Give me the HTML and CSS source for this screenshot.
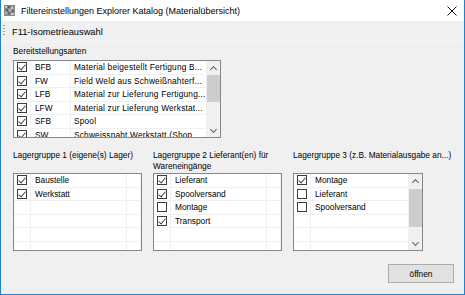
FILE: index.html
```html
<!DOCTYPE html>
<html lang="de">
<head>
<meta charset="utf-8">
<title>Filtereinstellungen</title>
<link rel="stylesheet" href="styles.css">
</head>
<body>
<div class="window">
  <header class="titlebar">
    <svg class="app-icon" width="11" height="11" viewBox="0 0 11 11">
      <rect width="11" height="11" fill="#8a8a8a"/>
      <rect x="1" y="1" width="2" height="2" fill="#c8c8c8"/>
      <rect x="4" y="1" width="2" height="2" fill="#5a5a5a"/>
      <rect x="7" y="2" width="2" height="2" fill="#d0d0d0"/>
      <rect x="2" y="4" width="2" height="2" fill="#5e5e5e"/>
      <rect x="5" y="4" width="2" height="2" fill="#bdbdbd"/>
      <rect x="8" y="5" width="2" height="2" fill="#6a6a6a"/>
      <rect x="1" y="7" width="2" height="2" fill="#b4b4b4"/>
      <rect x="4" y="7" width="2" height="3" fill="#707070"/>
      <rect x="7" y="8" width="3" height="2" fill="#c4c4c4"/>
    </svg>
    <span class="title">Filtereinstellungen Explorer Katalog (Materialübersicht)</span>
    <svg class="close" width="10" height="10" viewBox="0 0 10 10">
      <path d="M0.5 0.5 L9.5 9.5 M9.5 0.5 L0.5 9.5" stroke="#111" stroke-width="1" fill="none"/>
    </svg>
  </header>

  <div class="toolbar">
    <span class="grip"></span>
    <span class="tool-item">F11-Isometrieauswahl</span>
  </div>

  <main class="content">
    <section class="top-group">
      <div class="label">Bereitstellungsarten</div>
      <div class="listbox wide">
        <div class="rows">
          <div class="row"><span class="c-check"><span class="cb checked"></span></span><span class="c-code">BFB</span><span class="c-desc">Material beigestellt Fertigung B...</span></div>
          <div class="row"><span class="c-check"><span class="cb checked"></span></span><span class="c-code">FW</span><span class="c-desc">Field Weld aus Schweißnahterf...</span></div>
          <div class="row"><span class="c-check"><span class="cb checked"></span></span><span class="c-code">LFB</span><span class="c-desc">Material zur Lieferung Fertigung...</span></div>
          <div class="row"><span class="c-check"><span class="cb checked"></span></span><span class="c-code">LFW</span><span class="c-desc">Material zur Lieferung Werkstat...</span></div>
          <div class="row"><span class="c-check"><span class="cb checked"></span></span><span class="c-code">SFB</span><span class="c-desc">Spool</span></div>
          <div class="row"><span class="c-check"><span class="cb checked"></span></span><span class="c-code">SW</span><span class="c-desc">Schweissnaht Werkstatt (Shop...</span></div>
        </div>
        <div class="scrollbar sb-wide">
          <span class="arrow up"></span>
          <span class="thumb"></span>
          <span class="arrow down"></span>
        </div>
      </div>
    </section>

    <section class="groups">
      <div class="group">
        <div class="label two">Lagergruppe 1 (eigene(s) Lager)</div>
        <div class="listbox small">
          <div class="rows">
            <div class="row"><span class="c-check"><span class="cb checked"></span></span><span class="c-name">Baustelle</span><span class="c-rest"></span></div>
            <div class="row"><span class="c-check"><span class="cb checked"></span></span><span class="c-name">Werkstatt</span><span class="c-rest"></span></div>
            <div class="row"><span class="c-check"></span><span class="c-name"></span><span class="c-rest"></span></div>
            <div class="row"><span class="c-check"></span><span class="c-name"></span><span class="c-rest"></span></div>
            <div class="row"><span class="c-check"></span><span class="c-name"></span><span class="c-rest"></span></div>
            <div class="row"><span class="c-check"></span><span class="c-name"></span><span class="c-rest"></span></div>
          </div>
        </div>
      </div>
      <div class="group">
        <div class="label two">Lagergruppe 2 Lieferant(en) für<br>Wareneingänge</div>
        <div class="listbox small">
          <div class="rows">
            <div class="row"><span class="c-check"><span class="cb checked"></span></span><span class="c-name">Lieferant</span><span class="c-rest"></span></div>
            <div class="row"><span class="c-check"><span class="cb checked"></span></span><span class="c-name">Spoolversand</span><span class="c-rest"></span></div>
            <div class="row"><span class="c-check"><span class="cb"></span></span><span class="c-name">Montage</span><span class="c-rest"></span></div>
            <div class="row"><span class="c-check"><span class="cb checked"></span></span><span class="c-name">Transport</span><span class="c-rest"></span></div>
            <div class="row"><span class="c-check"></span><span class="c-name"></span><span class="c-rest"></span></div>
            <div class="row"><span class="c-check"></span><span class="c-name"></span><span class="c-rest"></span></div>
          </div>
        </div>
      </div>
      <div class="group">
        <div class="label two">Lagergruppe 3 (z.B. Materialausgabe an...)</div>
        <div class="listbox small last">
          <div class="rows">
            <div class="row"><span class="c-check"><span class="cb checked"></span></span><span class="c-name">Montage</span></div>
            <div class="row"><span class="c-check"><span class="cb"></span></span><span class="c-name">Lieferant</span></div>
            <div class="row"><span class="c-check"><span class="cb"></span></span><span class="c-name">Spoolversand</span></div>
            <div class="row"><span class="c-check"></span><span class="c-name"></span></div>
            <div class="row"><span class="c-check"></span><span class="c-name"></span></div>
            <div class="row"><span class="c-check"></span><span class="c-name"></span></div>
          </div>
          <div class="scrollbar sb-small">
            <span class="arrow up"></span>
            <span class="thumb"></span>
            <span class="arrow down"></span>
          </div>
        </div>
      </div>
    </section>

    <div class="actions">
      <button class="btn" type="button">öffnen</button>
    </div>
  </main>
</div>
</body>
</html>
```

FILE: styles.css
```css
* { box-sizing: border-box; }

html, body {
  margin: 0;
  padding: 0;
  background: #f0f0f0;
}

body {
  font-family: "Liberation Sans", Arial, sans-serif;
  font-size: 8.3px;
  color: #000;
}

.window {
  width: 465px;
  height: 295px;
  display: flex;
  flex-direction: column;
  background: #f0f0f0;
  border-left: 1px solid #1a84d8;
  border-right: 1px solid #1a84d8;
  border-bottom: 1px solid #1a84d8;
  overflow: hidden;
}

.titlebar {
  height: 21px;
  flex: none;
  background: #fff;
  display: flex;
  align-items: center;
  padding-left: 3px;
  padding-right: 7px;
}

.app-icon {
  flex: none;
}

.title {
  margin-left: 6px;
  font-size: 9px;
  white-space: nowrap;
  flex: 1;
}

.close {
  flex: none;
}

.toolbar {
  height: 21px;
  flex: none;
  display: flex;
  align-items: center;
  border-bottom: 1px solid #f8f8f8;
  padding-left: 2px;
}

.grip {
  width: 2px;
  height: 12px;
  background: repeating-linear-gradient(to bottom, #a0a0a0 0 1px, transparent 1px 3px);
}

.tool-item {
  margin-left: 7px;
  font-size: 9.3px;
  padding-top: 1px;
}

.content {
  flex: 1;
  display: flex;
  flex-direction: column;
  padding: 4px 10px 0 12px;
}

.label {
  line-height: 10px;
  height: 10px;
  margin-bottom: 4px;
  white-space: nowrap;
}

.label.two {
  height: 23px;
  line-height: 11px;
  margin-bottom: 0;
}

.listbox {
  height: 78px;
  border: 1px solid #828790;
  background: #fff;
  display: flex;
  overflow: hidden;
}

.listbox.wide { width: 208px; }
.listbox.small { width: 129px; }
.listbox.last { width: 130px; }

.rows {
  flex: 1;
  display: flex;
  flex-direction: column;
  overflow: hidden;
}

.row {
  flex: none;
  height: 13.5px;
  display: flex;
  align-items: stretch;
  border-bottom: 1px solid #f0f0f0;
  line-height: 12.5px;
  white-space: nowrap;
}

.row > span {
  overflow: hidden;
  border-right: 1px solid #f0f0f0;
}

.c-check {
  width: 17px;
  flex: none;
  display: flex;
  align-items: center;
  padding-left: 3px;
}

.c-code {
  width: 40px;
  flex: none;
  padding-left: 4px;
}

.c-desc {
  flex: 1;
  padding-left: 3px;
  letter-spacing: 0.2px;
}

.c-name {
  width: 96px;
  flex: none;
  padding-left: 4px;
}

.c-rest {
  flex: 1;
}

.listbox.last .c-name { flex: 1; }

.cb {
  width: 10px;
  height: 10px;
  border: 1px solid #3c3c3c;
  background: #fff;
  position: relative;
  display: block;
}

.cb.checked::after {
  content: "";
  position: absolute;
  left: 2px;
  top: 0;
  width: 3px;
  height: 6px;
  border-right: 1px solid #444;
  border-bottom: 1px solid #444;
  transform: rotate(40deg);
}

.scrollbar {
  width: 13px;
  flex: none;
  background: #f0f0f0;
  display: flex;
  flex-direction: column;
  align-items: stretch;
}

.arrow {
  height: 13px;
  flex: none;
  position: relative;
}

.arrow::after {
  content: "";
  position: absolute;
  left: 4px;
  width: 4px;
  height: 4px;
  border-left: 1px solid #606060;
  border-top: 1px solid #606060;
}

.arrow.up::after {
  top: 6px;
  transform: rotate(45deg);
}

.arrow.down::after {
  top: 3px;
  transform: rotate(225deg);
}

.thumb {
  background: #cdcdcd;
  margin: 1px 0 0;
}

.sb-wide .thumb { height: 27px; }
.sb-wide .arrow.down { margin-top: auto; }

.sb-small .arrow.up { height: 14px; }
.sb-small .thumb { height: 38px; margin-top: 1px; }
.sb-small .arrow.down { margin-top: auto; }

.top-group {
  display: flex;
  flex-direction: column;
}

.groups {
  display: grid;
  grid-template-columns: 140px 140px 140px;
  margin-top: 12px;
}

.actions {
  display: flex;
  justify-content: flex-end;
  margin-top: 13px;
}

.btn {
  width: 66px;
  height: 19px;
  background: #e1e1e1;
  border: 1px solid #adadad;
  font-family: "Liberation Sans", Arial, sans-serif;
  font-size: 8.3px;
  color: #000;
  padding: 0;
  margin: 0;
}
```
